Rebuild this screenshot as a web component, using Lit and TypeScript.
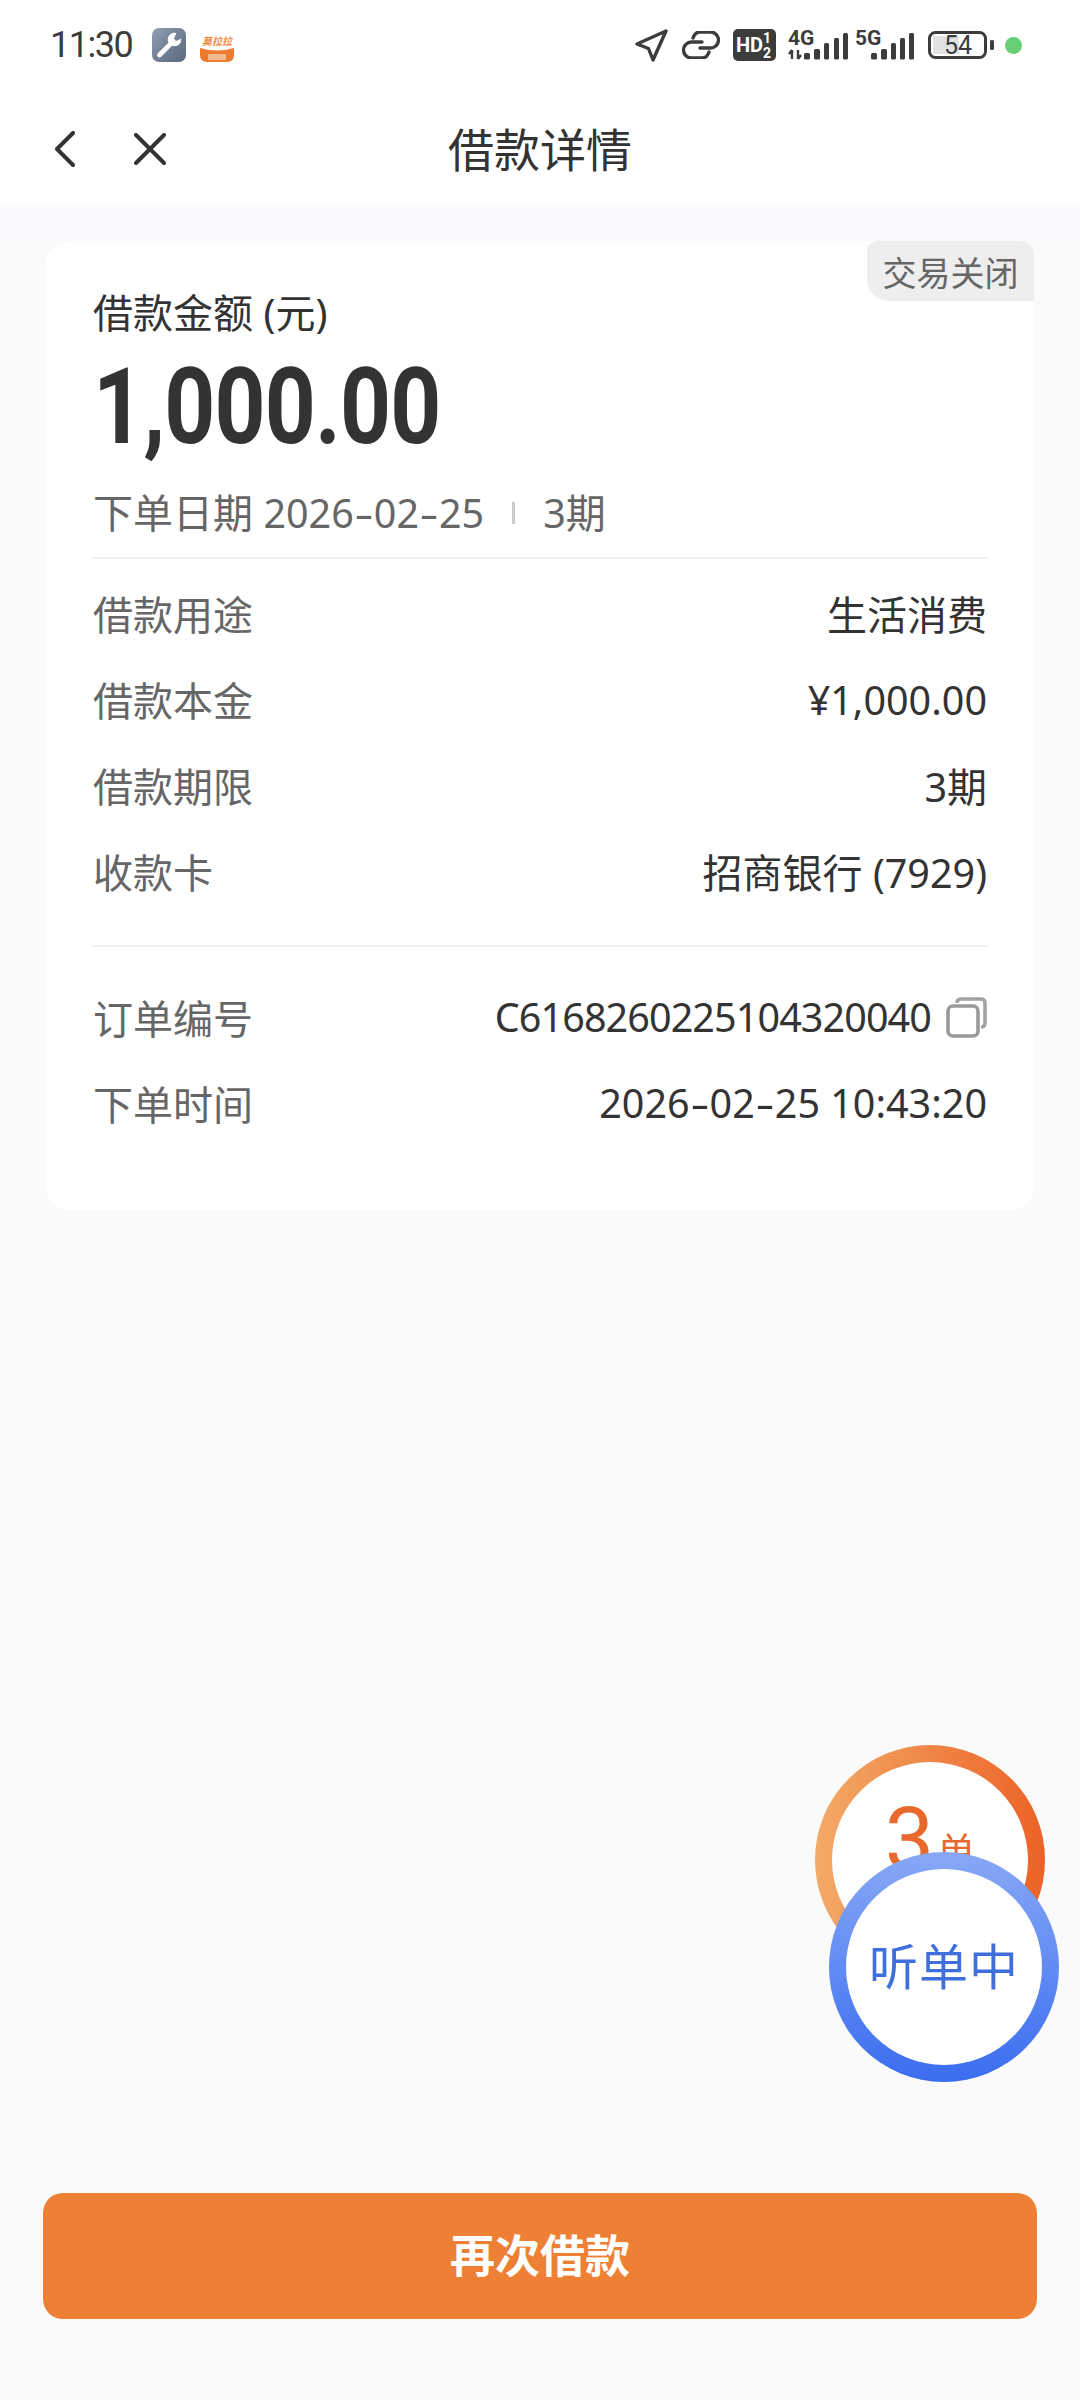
import { LitElement, html, css, svg } from "lit";
import { customElement } from "lit/decorators.js";

const num = (s: string, cls = "num") =>
  html`<span class=${cls}>${s.split("-").map((p, i) => (i ? html`<span class="hy">-</span>${p}` : p))}</span>`;

const rows1 = [
  ["借款用途", html`生活消费`],
  ["借款本金", num("¥1,000.00")],
  ["借款期限", html`${num("3")}期`],
  ["收款卡", html`招商银行 ${num("(7929)")}`],
];

const bars = (xs: number[][]) =>
  xs.map(([x, y, w]) => svg`<rect x=${x} y=${y} width=${w} height=${30.5 - y} rx="1.5" fill="#3c3c3c"></rect>`);

@customElement("app-root")
export class AppRoot extends LitElement {
  static styles = css`
    :host {
      display: flex;
      flex-direction: column;
      width: 1080px;
      height: 2400px;
      position: relative;
      overflow: hidden;
      background: #fafafa;
      color: #333;
      font-family: "Noto Sans", "Noto Sans CJK SC", sans-serif;
    }
    .status {
      height: 90px;
      background: #fff;
      display: flex;
      align-items: center;
      justify-content: space-between;
      padding: 0 58px 0 50px;
    }
    .status-left,
    .status-right {
      display: flex;
      align-items: center;
    }
    .time {
      font-family: Roboto, sans-serif;
      font-size: 36px;
      letter-spacing: -1.5px;
      color: #3c3c3c;
      width: 102px;
    }
    .gap-14 { margin-left: 14px; }
    .gap-13 { margin-left: 13px; }
    .gap-12 { margin-left: 12px; }
    .gap-7 { margin-left: 7px; }
    .gap-11 { margin-left: 11px; }
    svg { display: block; flex: none; }
    .dot {
      width: 17px;
      height: 17px;
      border-radius: 50%;
      background: #66cf75;
    }
    .nav {
      height: 117px;
      background: #fff;
      display: grid;
      grid-template-columns: 1fr auto 1fr;
      align-items: center;
    }
    .nav-left {
      display: flex;
      align-items: center;
      gap: 59px;
      padding-left: 55px;
    }
    .title {
      font-size: 46px;
      color: #333;
      line-height: 60px;
    }
    .band {
      height: 34px;
      background: #f9fafd;
    }
    .card {
      position: relative;
      margin: 0 46px;
      height: 969px;
      box-sizing: border-box;
      background: #fff;
      border-radius: 24px;
      padding: 44px 47px 0 47px;
    }
    .tag {
      position: absolute;
      top: 0;
      right: 0;
      width: 167px;
      height: 60px;
      box-sizing: border-box;
      display: flex;
      align-items: center;
      justify-content: center;
      background: #eeeeee;
      color: #666;
      font-size: 34px;
      border-radius: 10px 14px 0 22px;
    }
    .label {
      font-size: 40px;
      line-height: 56px;
      color: #333;
    }
    .amount {
      font-family: Roboto, sans-serif;
      font-size: 106px;
      font-weight: 700;
      line-height: 120px;
      margin-top: 6px;
      color: #333;
      transform: scaleX(0.84);
      transform-origin: left center;
      white-space: nowrap;
      letter-spacing: -1px;
    }
    .sub {
      display: flex;
      align-items: center;
      margin-top: 18px;
      font-size: 40px;
      line-height: 56px;
      color: #666;
    }
    .sep {
      width: 3px;
      height: 22px;
      background: #ccc;
      margin: 0 28px;
    }
    .line {
      height: 2px;
      background: #f1f1f1;
    }
    .line.head {
      margin-top: 16px;
      margin-bottom: 13px;
    }
    .line.mid {
      margin-top: 29px;
      margin-bottom: 29px;
    }
    .row {
      height: 86px;
      box-sizing: border-box;
      padding-bottom: 4px;
      display: flex;
      align-items: center;
      justify-content: space-between;
      font-size: 40px;
    }
    .row .k { color: #666; }
    .row .v { color: #333; display: flex; align-items: center; white-space: pre; }
    .num { font-size: 39.5px; }
    .id { font-size: 39.5px; letter-spacing: -0.9px; }
    .hy {
      display: inline-block;
      width: 20px;
      text-align: center;
      transform: scaleX(1.5);
    }
    .copy { margin-left: 15px; }
    .orange,
    .blue {
      position: absolute;
      width: 230px;
      height: 230px;
      box-sizing: border-box;
      border-radius: 50%;
      padding: 17px;
    }
    .orange {
      left: 815px;
      top: 1745px;
      background: linear-gradient(90deg, #f3aa68, #ec6226);
    }
    .blue {
      left: 829px;
      top: 1852px;
      background: linear-gradient(180deg, #88a8f6, #3b6df0);
    }
    .inner {
      width: 100%;
      height: 100%;
      border-radius: 50%;
      display: flex;
      align-items: center;
      justify-content: center;
    }
    .orange .inner {
      background: radial-gradient(circle, #fff 78%, #fff2e8 100%);
      color: #e9692c;
      align-items: flex-start;
    }
    .three {
      font-family: Roboto, sans-serif;
      font-size: 88px;
      line-height: 104px;
      margin-top: 25px;
      font-weight: 400;
    }
    .dan {
      font-size: 38px;
      line-height: 40px;
      margin-top: 68px;
      margin-left: 3px;
    }
    .blue .inner {
      background: radial-gradient(circle, #fff 72%, #eff3fd 100%);
      color: #3f6fdc;
      font-size: 49px;
      letter-spacing: 1px;
      box-sizing: border-box;
      padding-bottom: 8px;
    }
    .spacer { flex: 1; }
    .btn {
      margin: 0 43px 81px;
      height: 126px;
      box-sizing: border-box;
      padding-bottom: 6px;
      background: #ee8035;
      color: #fff;
      border-radius: 20px;
      display: flex;
      align-items: center;
      justify-content: center;
      font-size: 45px;
      font-weight: 700;
    }
  `;

  render() {
    return html`
      <div class="status">
        <div class="status-left">
          <span class="time">11:30</span>
          <svg width="34" height="34" viewBox="0 0 34 34">
            <defs>
              <linearGradient id="wr" x1="0" y1="0" x2="1" y2="1">
                <stop offset="0" stop-color="#8f9db0"></stop>
                <stop offset="1" stop-color="#5a677c"></stop>
              </linearGradient>
            </defs>
            <rect width="34" height="34" rx="7" fill="url(#wr)"></rect>
            <path d="M7.5 27 L19 15.5" stroke="#fff" stroke-width="4.6" stroke-linecap="round"></path>
            <circle cx="22.5" cy="11.5" r="6.8" fill="#fff"></circle>
            <path d="M25 3.5 L22 10.5 L24 13 L31 10 L30 3 Z" fill="#76849a"></path>
          </svg>
          <svg width="34" height="34" viewBox="0 0 34 34" style="margin-left:14px">
            <path d="M0 20 Q17 25 34 20 V27 Q34 34 27 34 H7 Q0 34 0 27 Z" fill="#ec7a2f"></path>
            <text x="17" y="17" font-size="10" font-weight="700" font-style="italic" text-anchor="middle" fill="#ee8a3c" font-family="Noto Sans CJK SC">莫拉拉</text>
            <rect x="8" y="26" width="18" height="6" rx="1" fill="#f6b98d"></rect>
          </svg>
        </div>
        <div class="status-right">
          <svg width="33" height="33" viewBox="0 0 33 33">
            <path d="M31 2 L2 15 L13.5 19.5 L18 31 Z" fill="none" stroke="#3c3c3c" stroke-width="3.4" stroke-linejoin="round"></path>
          </svg>
          <svg class="gap-14" width="38" height="28" viewBox="0 0 38 28">
            <path d="M20 11 H9.5 A8 8 0 0 0 9.5 27 H20 Q25 27 27 21" fill="none" stroke="#3c3c3c" stroke-width="3.4" stroke-linecap="round"></path>
            <path d="M18 17 H28.5 A8 8 0 0 0 28.5 1 H18 Q13 1 11 7" fill="none" stroke="#3c3c3c" stroke-width="3.4" stroke-linecap="round"></path>
          </svg>
          <svg class="gap-13" width="43" height="32" viewBox="0 0 43 32">
            <rect width="43" height="32" rx="5" fill="#3c3c3c"></rect>
            <text x="3" y="23" font-size="20" font-weight="700" fill="#fff" font-family="Roboto">HD</text>
            <text x="30" y="14" font-size="14" font-weight="700" fill="#fff" font-family="Roboto">1</text>
            <text x="30" y="29" font-size="14" font-weight="700" fill="#fff" font-family="Roboto">2</text>
          </svg>
          <svg class="gap-12" width="60" height="46" viewBox="0 -7 60 46">
            <text x="0" y="15.5" font-size="21" font-weight="700" fill="#3c3c3c" font-family="Roboto">4G</text>
            <path d="M4 21 V30 M4 21 L1 25 M10 30 V21 M10 30 L13 26" stroke="#3c3c3c" stroke-width="2.4" fill="none"></path>
            ${bars([[16, 24, 6], [26, 20, 6], [36, 14, 5], [46, 9, 5], [55, 4, 5]])}
          </svg>
          <svg class="gap-7" width="59" height="46" viewBox="0 -7 59 46">
            <text x="0" y="15.5" font-size="21" font-weight="700" fill="#3c3c3c" font-family="Roboto">5G</text>
            ${bars([[16, 24, 6], [26, 20, 6], [36, 14, 5], [45, 9, 5], [54, 4, 5]])}
          </svg>
          <svg class="gap-14" width="66" height="28" viewBox="0 0 66 28">
            <rect x="5" y="5" width="26" height="18" fill="#e2e2e2"></rect>
            <rect x="1.5" y="1.5" width="56" height="25" rx="6" fill="none" stroke="#3c3c3c" stroke-width="3"></rect>
            <rect x="62" y="9" width="4" height="10" rx="1.5" fill="#3c3c3c"></rect>
            <text x="30" y="23" font-size="25" text-anchor="middle" fill="#3c3c3c" font-family="Roboto">54</text>
          </svg>
          <span class="dot gap-11"></span>
        </div>
      </div>
      <div class="nav">
        <div class="nav-left">
          <svg width="20" height="36" viewBox="0 0 20 36">
            <path d="M18 2 L2 18 L18 34" fill="none" stroke="#333" stroke-width="4" stroke-linecap="round" stroke-linejoin="round"></path>
          </svg>
          <svg width="32" height="32" viewBox="0 0 32 32">
            <path d="M2 2 L30 30 M30 2 L2 30" fill="none" stroke="#333" stroke-width="4" stroke-linecap="round"></path>
          </svg>
        </div>
        <div class="title">借款详情</div>
        <div></div>
      </div>
      <div class="band"></div>
      <div class="card">
        <div class="tag">交易关闭</div>
        <div class="label">借款金额 (元)</div>
        <div class="amount">1,000.00</div>
        <div class="sub">
          <span>下单日期 ${num("2026-02-25")}</span>
          <span class="sep"></span>
          <span>${num("3")}期</span>
        </div>
        <div class="line head"></div>
        ${rows1.map(
          ([k, v]) => html`<div class="row"><span class="k">${k}</span><span class="v"><span>${v}</span></span></div>`
        )}
        <div class="line mid"></div>
        <div class="row">
          <span class="k">订单编号</span>
          <span class="v">${num("C6168260225104320040", "id")}<svg class="copy" width="41" height="41" viewBox="0 0 41 41">
              <path d="M11 6 Q11 2 15 2 H35 Q39 2 39 6 V26 Q39 30 35 30" fill="none" stroke="#a3a3a3" stroke-width="3.6"></path>
              <rect x="2" y="9" width="30" height="30" rx="5" fill="#fff" stroke="#999" stroke-width="3.6"></rect>
            </svg></span>
        </div>
        <div class="row">
          <span class="k">下单时间</span>
          <span class="v">${num("2026-02-25 10:43:20")}</span>
        </div>
      </div>
      <div class="spacer"></div>
      <div class="btn">再次借款</div>
      <div class="orange">
        <div class="inner"><span class="three">3</span><span class="dan">单</span></div>
      </div>
      <div class="blue">
        <div class="inner">听单中</div>
      </div>
    `;
  }
}
